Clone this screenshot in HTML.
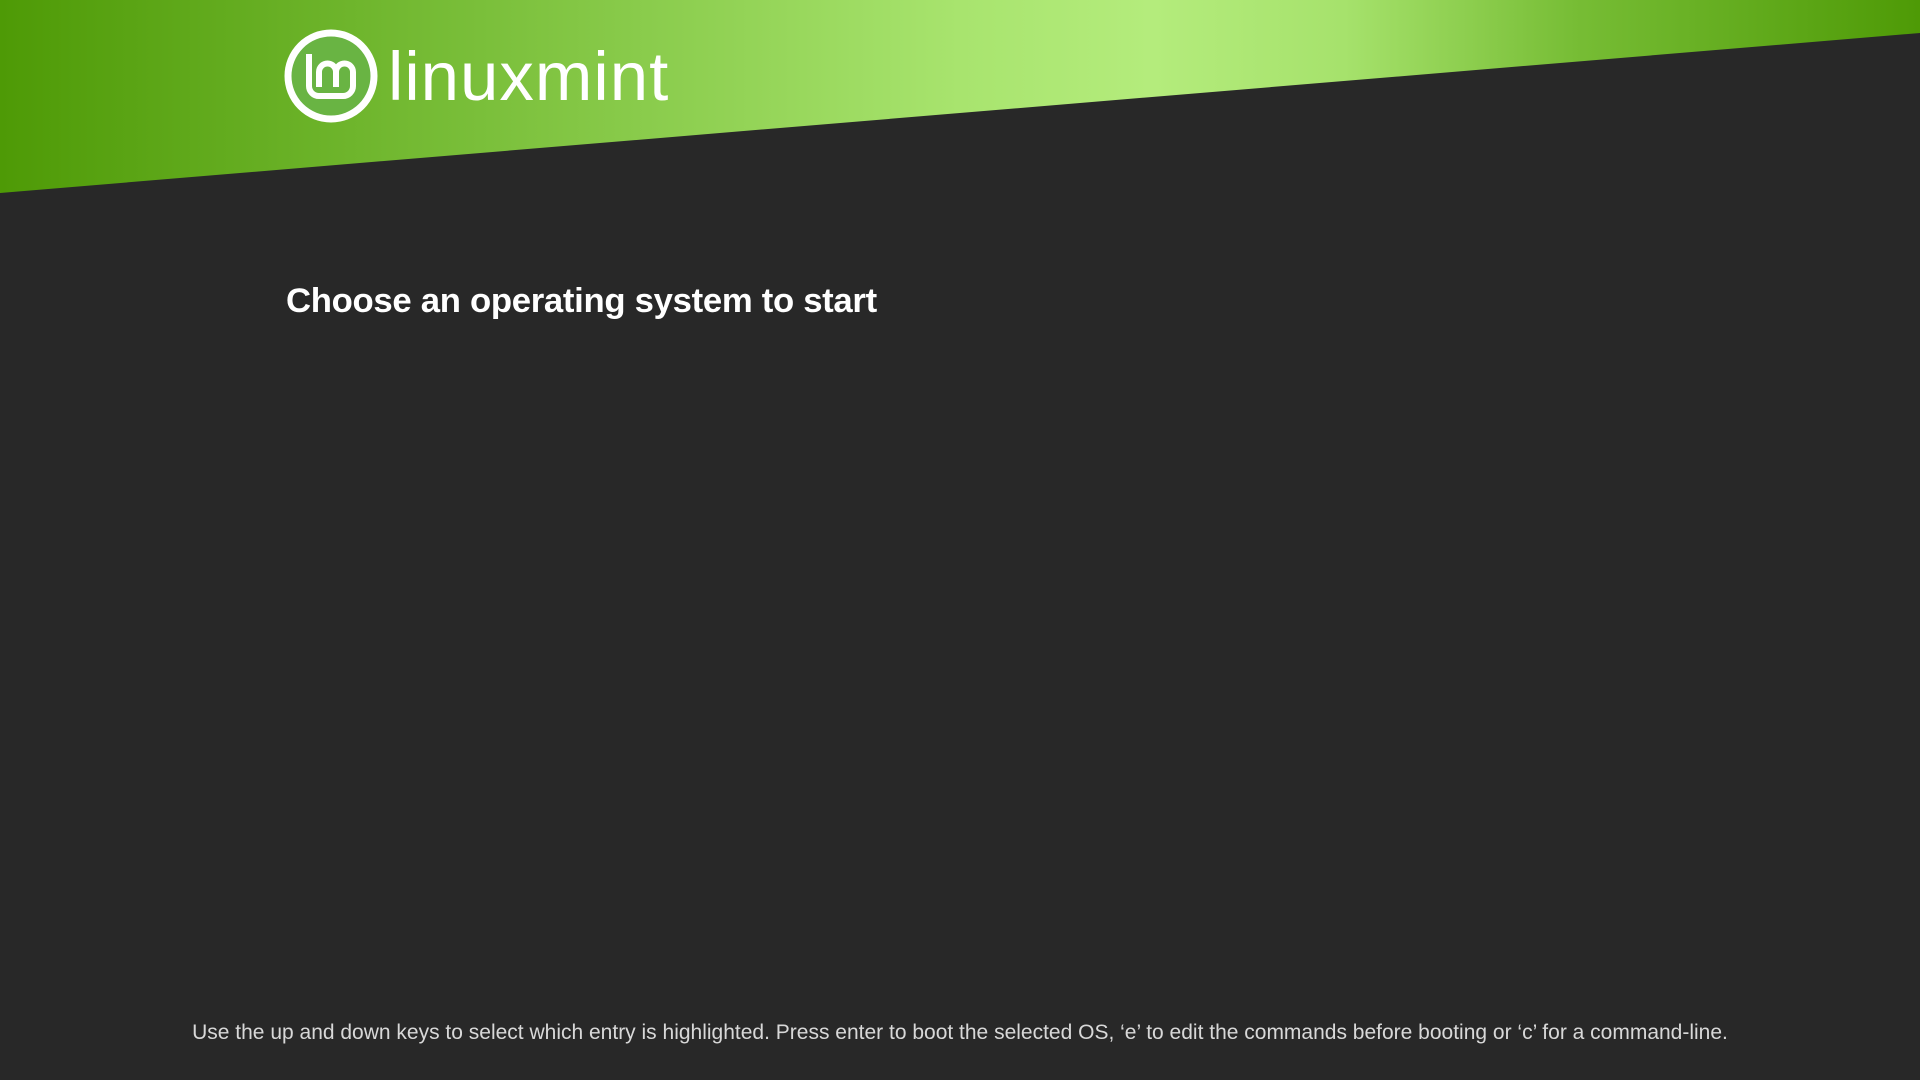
<!DOCTYPE html>
<html><head><meta charset="utf-8"><style>
html,body{margin:0;padding:0;width:1920px;height:1080px;overflow:hidden;background:#282828;font-family:"Liberation Sans",sans-serif;}
#band{position:absolute;left:0;top:0;width:1920px;height:200px;}
#logo{position:absolute;left:284px;top:29px;}
#word{position:absolute;left:388px;top:22px;color:#fff;font-size:69px;font-weight:400;letter-spacing:1px;line-height:110px;}
h1{position:absolute;left:286px;top:280px;margin:0;color:#fff;font-size:34.7px;font-weight:bold;line-height:42px;letter-spacing:-0.3px;}
#foot{position:absolute;left:0;width:1920px;text-align:center;top:1020px;color:#d8d8d8;font-size:21px;line-height:26px;}
</style></head><body>
<svg id="band" width="1920" height="200">
<defs><linearGradient id="g" x1="0" x2="1" y1="0" y2="0">
<stop offset="0" stop-color="#4e9a06"/>
<stop offset="0.25" stop-color="#7abf3a"/>
<stop offset="0.5" stop-color="#a8e46e"/>
<stop offset="0.6" stop-color="#b4ec7c"/>
<stop offset="0.7" stop-color="#a6e26c"/>
<stop offset="0.82" stop-color="#77bd35"/>
<stop offset="1" stop-color="#4e9a06"/>
</linearGradient></defs>
<polygon points="0,0 1920,0 1920,33 0,193" fill="url(#g)"/>
</svg>
<svg id="logo" width="94" height="94" viewBox="0 0 94 94">
<circle cx="47" cy="47" r="43" fill="#69b443" stroke="#fff" stroke-width="7"/>
<path d="M25 25 V57 a10 10 0 0 0 10 10 H59 a10 10 0 0 0 10-10 V43 a8.5 8.5 0 0 0-17 0 V58 M52 43 a8.5 8.5 0 0 0-17 0 V58" fill="none" stroke="#fff" stroke-width="6" stroke-linejoin="round"/>
</svg>
<div id="word">linuxmint</div>
<h1>Choose an operating system to start</h1>
<div id="foot">Use the up and down keys to select which entry is highlighted. Press enter to boot the selected OS, ‘e’ to edit the commands before booting or ‘c’ for a command-line.</div>
</body></html>
